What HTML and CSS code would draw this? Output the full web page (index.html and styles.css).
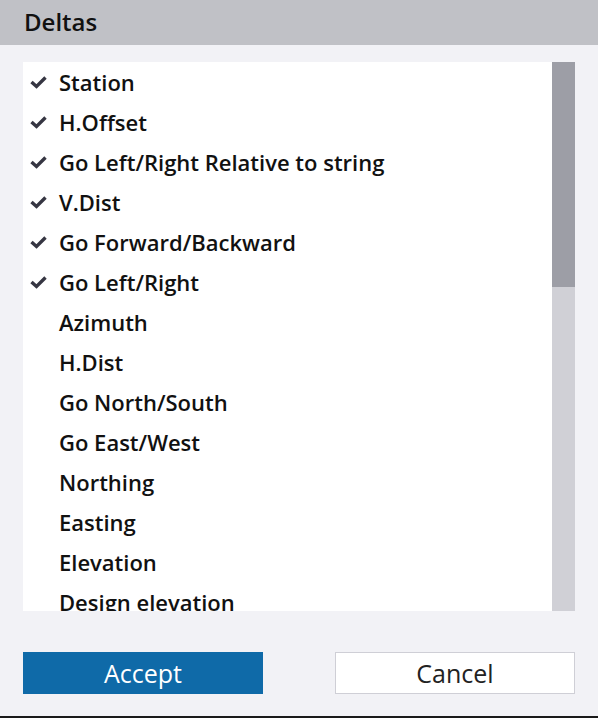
FILE: index.html
```html
<!DOCTYPE html>
<html lang="en">
<head>
    <meta charset="UTF-8">
    <title>Deltas</title>
    <link rel="stylesheet" href="styles.css">
</head>
<body>
    <div class="dialog">
        <div class="header">Deltas</div>

        <div class="content">
            <div class="list-box">
                <ul class="list">
                    <li class="item"><svg class="check" viewBox="0 0 17 13"><polyline points="1.5,6 6.5,10.5 15.5,1.5"/></svg>Station</li>
                    <li class="item"><svg class="check" viewBox="0 0 17 13"><polyline points="1.5,6 6.5,10.5 15.5,1.5"/></svg>H.Offset</li>
                    <li class="item"><svg class="check" viewBox="0 0 17 13"><polyline points="1.5,6 6.5,10.5 15.5,1.5"/></svg>Go Left/Right Relative to string</li>
                    <li class="item"><svg class="check" viewBox="0 0 17 13"><polyline points="1.5,6 6.5,10.5 15.5,1.5"/></svg>V.Dist</li>
                    <li class="item"><svg class="check" viewBox="0 0 17 13"><polyline points="1.5,6 6.5,10.5 15.5,1.5"/></svg>Go Forward/Backward</li>
                    <li class="item"><svg class="check" viewBox="0 0 17 13"><polyline points="1.5,6 6.5,10.5 15.5,1.5"/></svg>Go Left/Right</li>
                    <li class="item"><span class="check"></span>Azimuth</li>
                    <li class="item"><span class="check"></span>H.Dist</li>
                    <li class="item"><span class="check"></span>Go North/South</li>
                    <li class="item"><span class="check"></span>Go East/West</li>
                    <li class="item"><span class="check"></span>Northing</li>
                    <li class="item"><span class="check"></span>Easting</li>
                    <li class="item"><span class="check"></span>Elevation</li>
                    <li class="item"><span class="check"></span>Design elevation</li>
                </ul>
                <div class="scrollbar">
                    <div class="thumb"></div>
                </div>
            </div>

            <div class="buttons">
                <button class="btn btn-accept">Accept</button>
                <button class="btn btn-cancel">Cancel</button>
            </div>
        </div>
    </div>
</body>
</html>
```

FILE: styles.css
```css
body {
    margin: 0;
    font-family: "Open Sans", "Noto Sans", sans-serif;
    background: #f2f2f6;
}
.dialog {
    width: 598px;
    height: 718px;
    display: flex;
    flex-direction: column;
    background: #f2f2f6;
    border-bottom: 2px solid #1a1a1a;
    box-sizing: border-box;
}
.header {
    height: 45px;
    padding-left: 24px;
    background: #c0c1c6;
    color: #111;
    font-size: 24px;
    font-weight: 600;
    line-height: 44px;
}
.content {
    padding: 17px 23px 0 23px;
}
.list-box {
    display: flex;
    height: 549px;
    background: #fff;
    overflow: hidden;
}
.list {
    flex: 1;
    margin: 0;
    padding: 0;
    list-style: none;
}
.item {
    display: flex;
    align-items: center;
    height: 40px;
    font-size: 22px;
    font-weight: 600;
    color: #111;
}
.check {
    width: 17px;
    height: 13px;
    margin: 0 12px 0 7px;
    flex-shrink: 0;
}
.check polyline {
    fill: none;
    stroke: #363642;
    stroke-width: 3.4;
}
.scrollbar {
    width: 23px;
    background: #d0d0d6;
}
.thumb {
    height: 225px;
    background: #9d9ea6;
}
.buttons {
    display: flex;
    justify-content: space-between;
    margin-top: 41px;
}
.btn {
    width: 240px;
    height: 42px;
    font-family: inherit;
    font-size: 25px;
    padding: 0;
    border-radius: 0;
}
.btn-accept {
    background: #0f6aa8;
    color: #fff;
    border: none;
}
.btn-cancel {
    background: #fff;
    color: #222;
    border: 1px solid #cfcfd6;
}
```
